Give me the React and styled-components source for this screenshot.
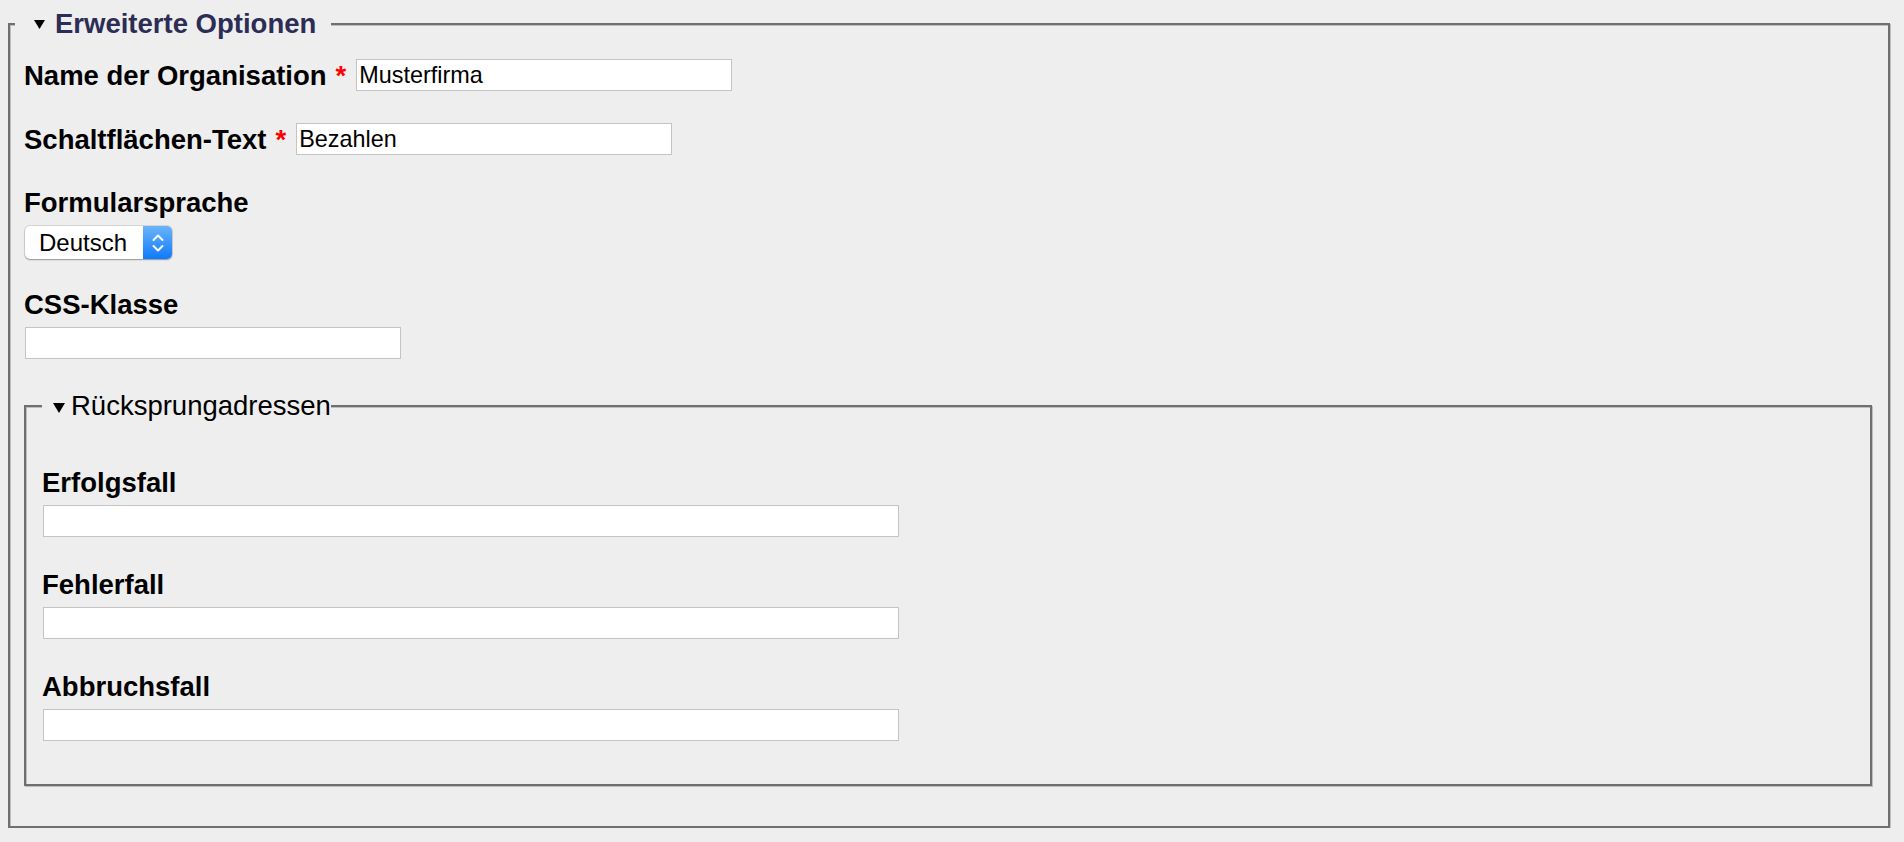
import React from "react";
import styled, { createGlobalStyle } from "styled-components";

const GlobalStyle = createGlobalStyle`
  html, body {
    background: #eeeeee;
  }

  body {
    margin: 8px;
    font-family: "Liberation Sans", Arial, sans-serif;
    color: #000;
  }
`;

const Fieldset = styled.fieldset`
  margin: 0 ${(p) => (p.$nested ? "0" : "6px")} 0 0;
  padding: ${(p) => (p.$nested ? "46px 16px 43px 16px" : "20px 16px 40px 14px")};
  border: 2px solid #6f6f6f;
  box-shadow: inset 1px 1px 0 #bebebe, 1px 1px 0 #bebebe;
  min-width: 0;
`;

const Legend = styled.legend`
  margin-left: ${(p) => (p.$nested ? "0" : "-9px")};
  padding: ${(p) => (p.$nested ? "0 0 0 11px" : "0 15px 0 19px")};
  background: #eeeeee;
  font-size: 27.5px;
  line-height: 31px;
  font-weight: ${(p) => (p.$nested ? 400 : 700)};
  color: ${(p) => (p.$nested ? "#000" : "#2c2c54")};
  white-space: nowrap;

  svg {
    display: inline-block;
    vertical-align: ${(p) => (p.$nested ? "2px" : "4px")};
    margin-right: ${(p) => (p.$nested ? "6px" : "10px")};
  }
`;

const Stack = styled.div`
  display: flex;
  flex-direction: column;
  align-items: stretch;
`;

const Field = styled.div`
  display: flex;
  flex-direction: ${(p) => (p.$inline ? "row" : "column")};
  align-items: ${(p) => (p.$inline ? "center" : "flex-start")};
  gap: ${(p) => (p.$inline ? "0" : "7px")};
  margin-bottom: ${(p) => (p.$mb ?? 32)}px;

  &:last-child {
    margin-bottom: 0;
  }
`;

const Label = styled.label`
  display: block;
  font-size: 27.5px;
  line-height: 31px;
  font-weight: 700;
  white-space: nowrap;
`;

const Req = styled.span`
  margin-left: 9px;
  color: #ff0000;
`;

const TextInput = styled.input`
  box-sizing: border-box;
  width: ${(p) => (p.$wide ? "856px" : "376px")};
  height: 32px;
  margin: 0 0 0 ${(p) => (p.$inline ? "10px" : "1px")};
  padding: 0 2px;
  border: 1px solid #c4c4c4;
  background: #fff;
  font-family: "Liberation Sans", Arial, sans-serif;
  font-size: 23.4px;
  color: #000;
  outline: none;
`;

const SelectWrap = styled.div`
  position: relative;
  width: 147px;
  height: 33px;
  margin: 1px 0 0 1px;
`;

const Select = styled.select`
  appearance: none;
  box-sizing: border-box;
  width: 100%;
  height: 100%;
  padding: 0 0 0 14px;
  border: none;
  border-radius: 5px;
  background: #fff;
  box-shadow: 0 0 0 1px rgba(0, 0, 0, 0.1), 0 1px 1.5px rgba(0, 0, 0, 0.3);
  font-family: "Liberation Sans", Arial, sans-serif;
  font-size: 24px;
  color: #000;
  outline: none;
`;

const Stepper = styled.span`
  position: absolute;
  top: 0;
  right: 0;
  bottom: 0;
  width: 29px;
  display: flex;
  align-items: center;
  justify-content: center;
  border-radius: 0 5px 5px 0;
  background: linear-gradient(#6ab4fb, #0f7afb);
  pointer-events: none;
`;

function Triangle({ w, h }) {
  return (
    <svg width={w} height={h} viewBox={`0 0 ${w} ${h}`}>
      <polygon points={`0,0 ${w},0 ${w / 2},${h}`} fill="#000" />
    </svg>
  );
}

function Chevrons() {
  return (
    <svg width="14" height="20" viewBox="0 0 14 20" fill="none" stroke="#fff" strokeWidth="2" strokeLinecap="round" strokeLinejoin="round">
      <path d="M2.5 7 L7 2.5 L11.5 7" />
      <path d="M2.5 13 L7 17.5 L11.5 13" />
    </svg>
  );
}

const returnUrls = ["Erfolgsfall", "Fehlerfall", "Abbruchsfall"];

export default function App() {
  return (
    <>
      <GlobalStyle />
      <Fieldset>
        <Legend>
          <Triangle w={11} h={9} />
          Erweiterte Optionen
        </Legend>
        <Stack>
          <Field $inline>
            <Label>
              Name der Organisation<Req>*</Req>
            </Label>
            <TextInput $inline defaultValue="Musterfirma" />
          </Field>
          <Field $inline>
            <Label>
              Schaltflächen-Text<Req>*</Req>
            </Label>
            <TextInput $inline defaultValue="Bezahlen" />
          </Field>
          <Field $mb={30}>
            <Label>Formularsprache</Label>
            <SelectWrap>
              <Select defaultValue="de">
                <option value="de">Deutsch</option>
                <option value="en">English</option>
              </Select>
              <Stepper>
                <Chevrons />
              </Stepper>
            </SelectWrap>
          </Field>
          <Field $mb={31}>
            <Label>CSS-Klasse</Label>
            <TextInput />
          </Field>
          <Fieldset $nested>
            <Legend $nested>
              <Triangle w={12} h={10} />
              Rücksprungadressen
            </Legend>
            <Stack>
              {returnUrls.map((name) => (
                <Field key={name}>
                  <Label>{name}</Label>
                  <TextInput $wide />
                </Field>
              ))}
            </Stack>
          </Fieldset>
        </Stack>
      </Fieldset>
    </>
  );
}
